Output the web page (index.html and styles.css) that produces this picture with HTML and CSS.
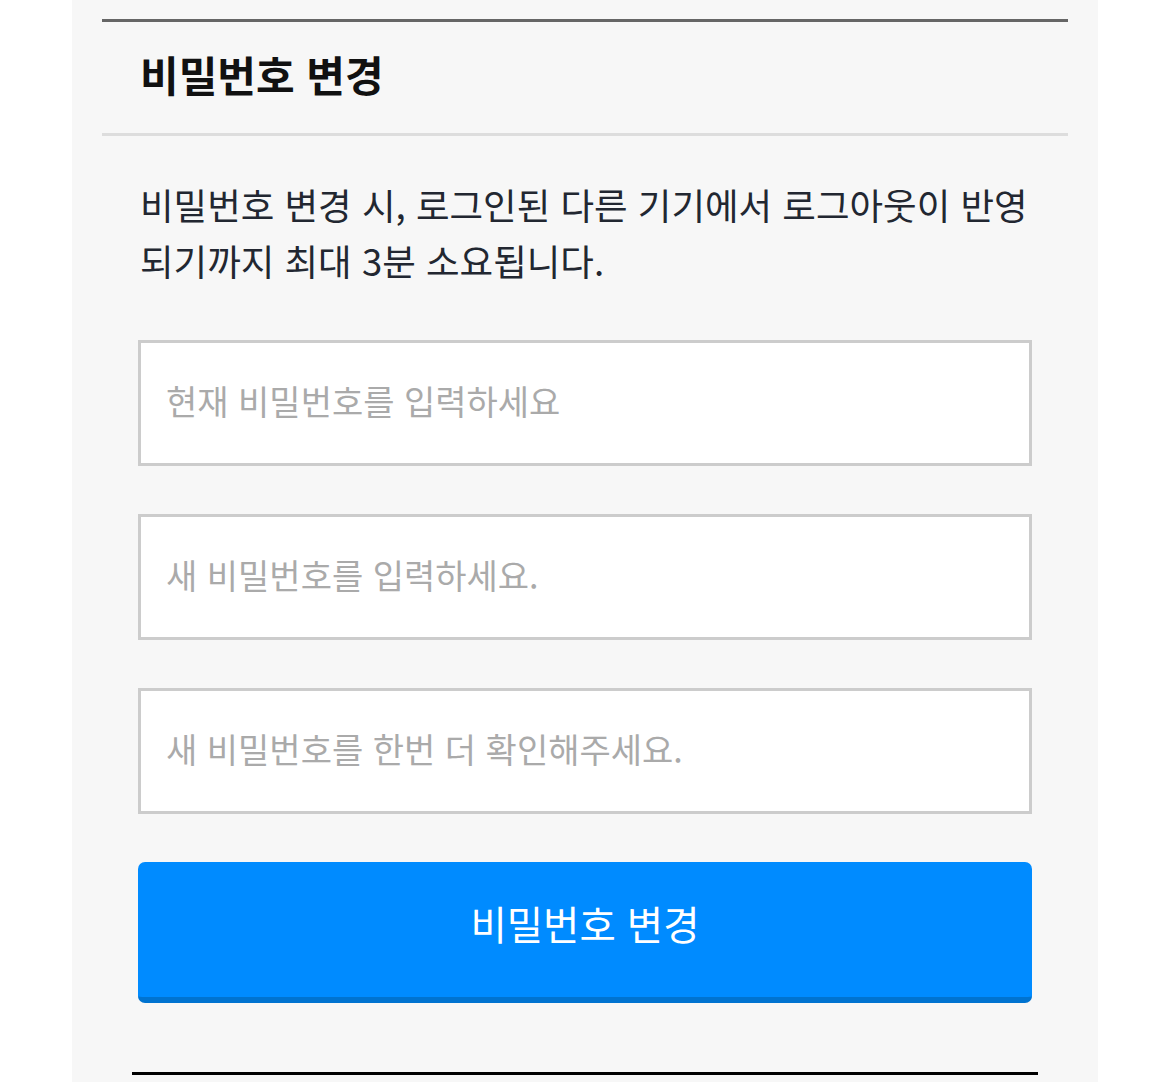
FILE: index.html
```html
<!DOCTYPE html>
<html lang="ko">
<head>
<meta charset="utf-8">
<link rel="stylesheet" href="styles.css">
</head>
<body>
<div class="panel">
  <div class="header"><h1 class="title">비밀번호 변경</h1></div>
  <div class="content">
    <p class="desc">비밀번호 변경 시, 로그인된 다른 기기에서 로그아웃이 반영 되기까지 최대 3분 소요됩니다.</p>
    <form class="form">
      <input class="field" type="password" placeholder="현재 비밀번호를 입력하세요">
      <input class="field" type="password" placeholder="새 비밀번호를 입력하세요.">
      <input class="field" type="password" placeholder="새 비밀번호를 한번 더 확인해주세요.">
      <button class="submit" type="button">비밀번호 변경</button>
    </form>
  </div>
  <div class="footer-line"></div>
</div>
</body>
</html>
```

FILE: styles.css
```css
html, body {
  margin: 0;
  padding: 0;
  background: #fff;
}
body {
  font-family: "Noto Sans CJK KR", "Noto Sans", sans-serif;
}
.panel {
  width: 1026px;
  margin: 0 auto;
  background: #f7f7f7;
  padding-top: 19px;
  min-height: 1082px;
  box-sizing: border-box;
  display: flow-root;
}
.header {
  margin: 0 30px;
  border-top: 3px solid #666;
  border-bottom: 3px solid #ddd;
  height: 111px;
  box-sizing: content-box;
  display: flex;
  align-items: center;
  padding-bottom: 0;
}
.title {
  margin: 0 0 8px 38px;
  font-size: 42px;
  font-weight: 700;
  color: #111;
  line-height: 1;
}
.content {
  padding: 0 66px;
}
.desc {
  margin: 41px 0 0 2px;
  font-size: 36.5px;
  line-height: 56px;
  color: #222731;
}
.form {
  margin-top: 51px;
  display: flex;
  flex-direction: column;
  gap: 48px;
}
.field {
  height: 126px;
  box-sizing: border-box;
  border: 3px solid #ccc;
  background: #fff;
  padding: 0 25px 6px;
  font-family: inherit;
  font-size: 34px;
  color: #333;
  outline: none;
  border-radius: 0;
  margin: 0;
}
.field::placeholder {
  color: #aaa;
}
.submit {
  height: 141px;
  box-sizing: border-box;
  border: none;
  border-bottom: 6px solid #0073d0;
  border-radius: 7px;
  background: #008bff;
  color: #fff;
  font-family: inherit;
  font-size: 39.5px;
  padding: 0 0 14px;
  margin: 0;
}
.footer-line {
  margin: 69px 60px 0;
  height: 3px;
  background: #000;
}
```
